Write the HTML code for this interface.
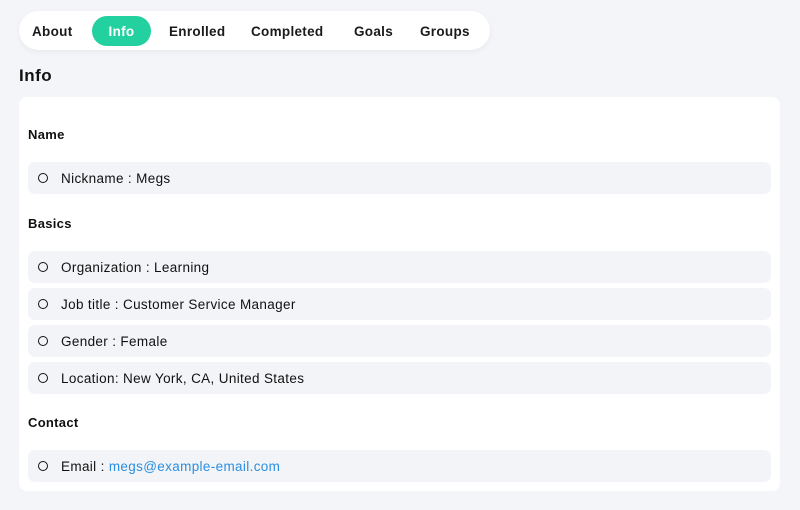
<!DOCTYPE html>
<html><head><style>
*{margin:0;padding:0;box-sizing:border-box}
body{width:800px;height:510px;background:#f4f5f9;font-family:"Liberation Sans",sans-serif;color:#111;position:relative;overflow:hidden}
.nav{position:absolute;left:19px;top:11px;width:471px;height:39px;background:#fff;border-radius:20px;box-shadow:0 2px 6px rgba(0,0,0,.05)}
.nav span{position:absolute;top:1px;line-height:39px;font-size:13.5px;font-weight:bold;color:#1a1a1a;letter-spacing:.3px}
.nav .act{background:#22d0a0;color:#fff;top:5px;height:30px;line-height:31px;border-radius:15px;width:59px;text-align:center}
h1{position:absolute;left:19px;top:66px;font-size:17px;font-weight:bold;letter-spacing:.5px}
.card{position:absolute;left:19px;top:97px;width:761px;height:394px;background:#fff;border-radius:8px}
.lbl{position:absolute;left:9px;font-size:13px;font-weight:bold;letter-spacing:.3px;margin-top:1px}
.row{position:absolute;left:9px;width:743px;height:32px;background:#f3f4f8;border-radius:7px;font-size:13.5px;line-height:33px;padding-left:33px;letter-spacing:.35px}
.row:before{content:"";position:absolute;left:10px;top:11px;width:8px;height:8px;border:1.6px solid #111;border-radius:50%}
a{color:#2a8fe0;text-decoration:none}
</style></head><body>
<div class="nav">
<span style="left:13px">About</span>
<span class="act" style="left:73px">Info</span>
<span style="left:150px">Enrolled</span>
<span style="left:232px">Completed</span>
<span style="left:335px">Goals</span>
<span style="left:401px">Groups</span>
</div>
<h1>Info</h1>
<div class="card">
<div class="lbl" style="top:29px">Name</div>
<div class="row" style="top:65px">Nickname : Megs</div>
<div class="lbl" style="top:118px">Basics</div>
<div class="row" style="top:154px">Organization : Learning</div>
<div class="row" style="top:191px">Job title : Customer Service Manager</div>
<div class="row" style="top:228px">Gender : Female</div>
<div class="row" style="top:265px">Location: New York, CA, United States</div>
<div class="lbl" style="top:317px">Contact</div>
<div class="row" style="top:353px">Email : <a>megs@example-email.com</a></div>
</div>
</body></html>
